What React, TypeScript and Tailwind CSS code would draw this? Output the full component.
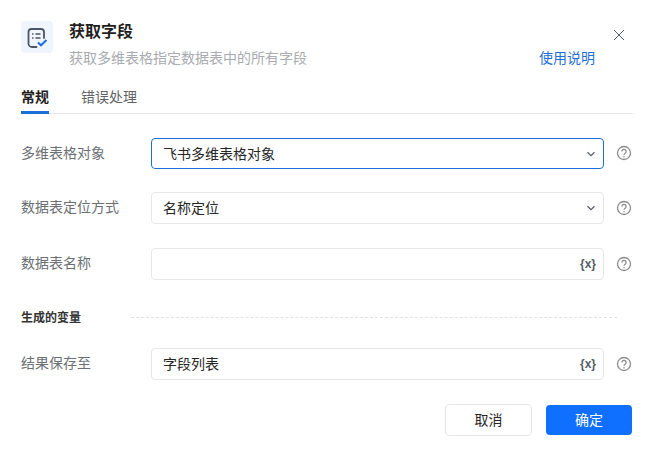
import React from "react";

const font = { fontFamily: '"Noto Sans CJK SC", "Liberation Sans", sans-serif' };

function Chevron() {
  return (
    <svg width="10" height="6" viewBox="0 0 10 6" fill="none" stroke="#555b66" strokeWidth="1.2">
      <path d="M1.5 1.200 5 4.600 8.500 1.200" />
    </svg>
  );
}

function Help() {
  return (
    <svg width="16" height="16" viewBox="0 0 16 16" fill="none" className="shrink-0">
      <circle cx="8" cy="8" r="6.500" stroke="#8c8c8c" strokeWidth="1.300" />
      <path d="M5.900 6.400a2.100 2.100 0 1 1 3.200 1.800c-.7.4-1.100.8-1.100 1.600" stroke="#8c8c8c" strokeWidth="1.300" />
      <circle cx="8" cy="11.700" r=".8" fill="#8c8c8c" />
    </svg>
  );
}

function VarMark() {
  return (
    <span className="text-xs leading-none font-bold text-[#555b66] pb-[1px]" style={{ fontFamily: '"Liberation Sans", sans-serif' }}>
      {"{x}"}
    </span>
  );
}

function Row({ label, value, focus, right, className, boxClass, helpClass }: { label: string; value?: string; focus?: boolean; right: React.ReactNode; className?: string; boxClass?: string; helpClass?: string }) {
  return (
    <div className={"flex items-start " + (className ?? "")}>
      <div className="w-[130px] shrink-0 text-sm leading-[28px] text-[#6b6f75]">{label}</div>
      <div className={"w-[453px] rounded-[4px] border bg-white flex items-center justify-between pl-[11px] pr-[7px] text-sm text-[#262626] " + (boxClass ?? "h-8 ") + (focus ? " border-[#1d6fd8]" : " border-[#e5e6e8]")}>
        <span className="pb-[2px]">{value}</span>
        {right}
      </div>
      <div className={"ml-3 flex items-center " + (helpClass ?? "h-8")}><Help /></div>
    </div>
  );
}

export default function App() {
  return (
    <div className="w-[653px] h-[456px] bg-white relative pl-[21px] pr-[20px] pt-[21px] overflow-hidden" style={font}>
      <div className="flex items-start h-[53px]">
        <div className="w-[32px] h-[32px] rounded-[4px] bg-[#f0f5fd] shrink-0">
          <svg width="32" height="32" viewBox="0 0 32 32" fill="none">
            <path d="M15.500 26H11a3.500 3.500 0 0 1-3.500-3.500V11A3 3 0 0 1 10.500 8H20a3 3 0 0 1 3 3v6" stroke="#4b5563" strokeWidth="1.800" strokeLinecap="round" />
            <path d="M11 13h1.500M14.500 13h5M11 17h1.500M14.500 17h5" stroke="#4b5563" strokeWidth="1.600" />
            <path d="m17 21.500 3 2.800 5.500-5.300" stroke="#1f6fe0" strokeWidth="2" />
          </svg>
        </div>
        <div className="ml-4 min-w-0 flex-1">
          <div className="text-base font-semibold leading-[18px] text-[#1f1f1f]">获取字段</div>
          <div className="mt-[8px] text-sm leading-[20px] text-[#a8abb0]">获取多维表格指定数据表中的所有字段</div>
        </div>
        <div className="flex flex-col items-end h-full">
          <svg width="12" height="12" viewBox="0 0 12 12" stroke="#555b66" strokeWidth="1" className="mt-[8px] mr-[8px]">
            <path d="M1 1l10 10M11 1 1 11" />
          </svg>
          <div className="mt-[6px] mr-[38px] text-sm leading-[20px] text-[#1d6fd8]">使用说明</div>
        </div>
      </div>

      <div className="w-[612px] mt-[10px] flex border-b border-[#e5e6e8] h-[30px] text-sm">
        <div className="h-[30px] border-b-[3px] border-[#1d6fd8] font-bold text-[#1f1f1f] leading-[24px]">常规</div>
        <div className="ml-8 text-[#5f6368] leading-[24px]">错误处理</div>
      </div>

      <Row className="mt-[24px]" boxClass="h-[31px]" helpClass="h-[30px]" label="多维表格对象" value="飞书多维表格对象" focus right={<Chevron />} />
      <Row className="mt-[23px]" label="数据表定位方式" value="名称定位" right={<Chevron />} />
      <Row className="mt-[24px]" label="数据表名称" right={<VarMark />} />

      <div className="flex items-center mt-[27px] h-[20px]">
        <div className="w-[110px] text-xs font-bold text-[#333]">生成的变量</div>
        <div className="w-[486px] border-t border-dashed border-[#e2e3e5]" />
      </div>

      <Row className="mt-[21px]" label="结果保存至" value="字段列表" right={<VarMark />} />

      <div className="flex justify-end w-[611px] mt-[24px] gap-[14px]">
        <div className="w-[87px] h-8 rounded-[4px] border border-[#e5e6e8] bg-white flex items-center justify-center text-sm text-[#262626] pb-[2px]">取消</div>
        <div className="w-[86px] h-[30px] mt-[1px] rounded-[4px] bg-[#0f6fff] flex items-center justify-center text-sm text-white pb-[2px]">确定</div>
      </div>
    </div>
  );
}
